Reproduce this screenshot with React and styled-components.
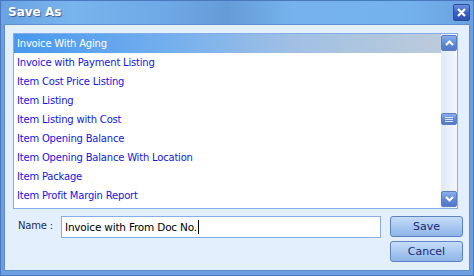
import React from "react";
import styled, { createGlobalStyle } from "styled-components";

const GlobalStyle = createGlobalStyle`
  html, body {
    margin: 0;
    padding: 0;
    background: #ffffff;
  }
  body {
    font-family: Tahoma, "DejaVu Sans", "Liberation Sans", sans-serif;
  }
`;

const Window = styled.div`
  width: 474px;
  height: 276px;
  box-sizing: border-box;
  display: flex;
  flex-direction: column;
  background: #6c9fe0;
  border: 1px solid #4a78c0;
`;

const TitleBar = styled.div`
  height: 23px;
  flex: none;
  display: flex;
  align-items: center;
  justify-content: space-between;
  padding: 0 3px 1px 7px;
  box-sizing: border-box;
  background: linear-gradient(
    90deg,
    #6aa2e2 0%,
    #78b4ee 15%,
    #6fa8e6 35%,
    #659cd8 48%,
    #76b3ee 62%,
    #74b2ee 85%,
    #6aa2e0 100%
  );
`;

const Title = styled.span`
  color: #ffffff;
  font-family: "DejaVu Sans", sans-serif;
  font-weight: bold;
  font-size: 12px;
  text-shadow: 1px 1px 1px #3a5f94;
`;

const CloseButton = styled.div`
  width: 17px;
  height: 17px;
  box-sizing: border-box;
  border-radius: 2px;
  border: 1px solid #2b4e98;
  background: linear-gradient(180deg, #6f8fe0 0%, #3d62c6 50%, #2d50b0 100%);
  display: flex;
  align-items: center;
  justify-content: center;
`;

const Client = styled.div`
  flex: 1;
  margin: 0 3px 4px 3px;
  border: 1px solid #5f8fd0;
  background: #e3effc;
  padding: 8px 11px 0 8px;
  display: flex;
  flex-direction: column;
`;

const ListBox = styled.div`
  height: 176px;
  box-sizing: border-box;
  border: 1px solid #86aee6;
  background: #ffffff;
  display: flex;
`;

const Items = styled.div`
  flex: 1;
  overflow: hidden;
`;

const Item = styled.div`
  height: 19px;
  line-height: 19px;
  padding-left: 3px;
  font-family: "DejaVu Sans", sans-serif;
  font-size: 10px;
  letter-spacing: -0.2px;
  white-space: nowrap;
  color: ${(p) => (p.$selected ? "#ffffff" : "#1414e6")};
  background: ${(p) =>
    p.$selected
      ? "linear-gradient(90deg, #4898ef 0%, #72aeee 35%, #a0c0e4 65%, #bccbdb 100%)"
      : "transparent"};
`;

const ScrollBar = styled.div`
  width: 16px;
  flex: none;
  padding: 1px 0;
  background: linear-gradient(90deg, #dde9f8 0%, #f3f8fe 100%);
  display: flex;
  flex-direction: column;
  align-items: center;
`;

const ScrollButton = styled.div`
  width: 16px;
  height: 16px;
  box-sizing: border-box;
  border-radius: 2px;
  border: 1px solid #5a7fc0;
  background: linear-gradient(180deg, #8ab0ea 0%, #5f88d6 55%, #4f78c8 100%);
  display: flex;
  align-items: center;
  justify-content: center;
`;

const Thumb = styled(ScrollButton)`
  height: 12px;
  margin-top: ${(p) => p.$offset}px;
`;

const Spacer = styled.div`
  flex: 1;
`;

const Bottom = styled.div`
  display: flex;
  padding-top: 7px;
`;

const Label = styled.span`
  width: 48px;
  flex: none;
  padding: 4px 0 0 5px;
  box-sizing: border-box;
  font-family: "DejaVu Sans", sans-serif;
  font-size: 10px;
  color: #1c2a5a;
  letter-spacing: -0.2px;
`;

const Input = styled.div`
  width: 320px;
  height: 22px;
  flex: none;
  box-sizing: border-box;
  border: 1px solid #86aee6;
  background: #ffffff;
  padding-left: 3px;
  display: flex;
  align-items: center;
  font-family: "DejaVu Sans", sans-serif;
  font-size: 10.5px;
  letter-spacing: -0.2px;
  color: #000000;
`;

const Caret = styled.span`
  display: inline-block;
  width: 1px;
  height: 14px;
  background: #000000;
  margin-left: 1px;
`;

const Buttons = styled.div`
  margin-left: 9px;
  flex: none;
  display: flex;
  flex-direction: column;
  gap: 4px;
`;

const Button = styled.div`
  width: 73px;
  height: 21px;
  box-sizing: border-box;
  border: 1px solid #5c82c4;
  border-radius: 3px;
  background: linear-gradient(180deg, #c6dcf7 0%, #a9c8f0 50%, #8fb5e8 100%);
  display: flex;
  align-items: center;
  justify-content: center;
  font-family: "DejaVu Sans", sans-serif;
  font-size: 11px;
  color: #1a2878;
`;

const items = [
  "Invoice With Aging",
  "Invoice with Payment Listing",
  "Item Cost Price Listing",
  "Item Listing",
  "Item Listing with Cost",
  "Item Opening Balance",
  "Item Opening Balance With Location",
  "Item Package",
  "Item Profit Margin Report",
];

const App = () => (
  <>
    <GlobalStyle />
    <Window>
      <TitleBar>
        <Title>Save As</Title>
        <CloseButton>
          <svg width="9" height="9" viewBox="0 0 9 9">
            <path d="M1 1 L8 8 M8 1 L1 8" stroke="#ffffff" strokeWidth="2.2" />
          </svg>
        </CloseButton>
      </TitleBar>
      <Client>
        <ListBox>
          <Items>
            {items.map((t, i) => (
              <Item key={t} $selected={i === 0}>
                {t}
              </Item>
            ))}
          </Items>
          <ScrollBar>
            <ScrollButton>
              <svg width="9" height="6" viewBox="0 0 9 6">
                <path d="M1 5 L4.5 1.5 L8 5" stroke="#ffffff" strokeWidth="2" fill="none" />
              </svg>
            </ScrollButton>
            <Thumb $offset={62}>
              <svg width="8" height="5" viewBox="0 0 8 5">
                <path d="M0 0.5 H8 M0 2.5 H8 M0 4.5 H8" stroke="#dbe6fa" strokeWidth="1" />
              </svg>
            </Thumb>
            <Spacer />
            <ScrollButton>
              <svg width="9" height="6" viewBox="0 0 9 6">
                <path d="M1 1 L4.5 4.5 L8 1" stroke="#ffffff" strokeWidth="2" fill="none" />
              </svg>
            </ScrollButton>
          </ScrollBar>
        </ListBox>
        <Bottom>
          <Label>Name :</Label>
          <Input>
            Invoice with From Doc No.
            <Caret />
          </Input>
          <Buttons>
            <Button>Save</Button>
            <Button>Cancel</Button>
          </Buttons>
        </Bottom>
      </Client>
    </Window>
  </>
);

export default App;
